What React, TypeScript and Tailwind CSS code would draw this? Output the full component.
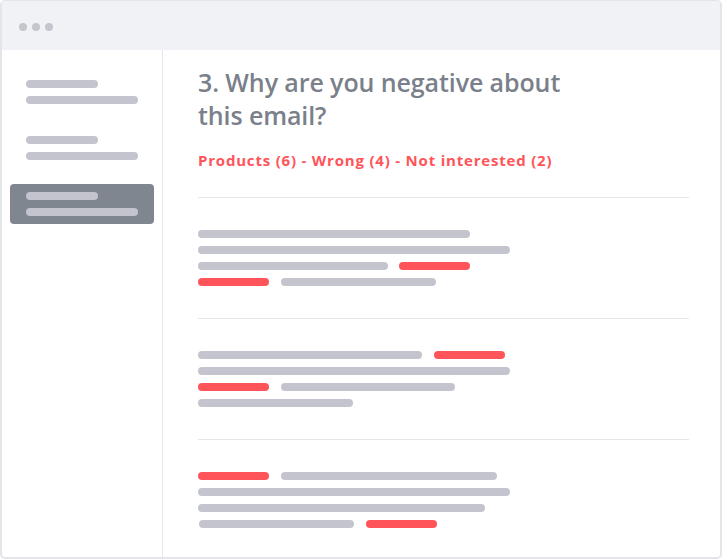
const Bar = ({ w, red = false, ml = 0 }: { w: number; red?: boolean; ml?: number }) => (
  <div
    className={`h-2 rounded-full ${red ? 'bg-[#ff5459]' : 'bg-[#c4c4ce]'}`}
    style={{ width: w, marginLeft: ml }}
  />
);

type Row = { w: number; red?: boolean; ml?: number }[];

const sections: Row[][] = [
  [
    [{ w: 272 }],
    [{ w: 312 }],
    [{ w: 190 }, { w: 71, red: true, ml: 11 }],
    [{ w: 71, red: true }, { w: 155, ml: 12 }],
  ],
  [
    [{ w: 224 }, { w: 71, red: true, ml: 12 }],
    [{ w: 312 }],
    [{ w: 71, red: true }, { w: 174, ml: 12 }],
    [{ w: 155 }],
  ],
  [
    [{ w: 71, red: true }, { w: 216, ml: 12 }],
    [{ w: 312 }],
    [{ w: 287 }],
    [{ w: 155, ml: 1 }, { w: 71, red: true, ml: 12 }],
  ],
];

const SideItem = ({ active = false }: { active?: boolean }) => (
  <div className={`flex h-10 flex-col gap-2 rounded px-4 pt-2 ${active ? 'bg-[#7f8690]' : ''}`}>
    <div className="h-2 w-[72px] rounded-full bg-[#c4c4ce]" />
    <div className="h-2 w-[112px] rounded-full bg-[#c4c4ce]" />
  </div>
);

export default function App() {
  return (
    <div className="h-[559px] w-[722px] bg-white">
      <div className="flex h-full flex-col overflow-hidden rounded-[5px] border-2 border-t border-[#e3e5ea] bg-white">
        <div className="flex h-[49px] shrink-0 items-center gap-[5px] bg-[#f1f2f6] pl-[17px] pt-[2px]">
          <span className="h-2 w-2 rounded-full bg-[#c5c6cd]" />
          <span className="h-2 w-2 rounded-full bg-[#c5c6cd]" />
          <span className="h-2 w-2 rounded-full bg-[#c5c6cd]" />
        </div>
        <div className="flex flex-1">
          <aside className="flex w-[161px] shrink-0 flex-col gap-4 border-r border-[#e5e6e8] px-2 pt-[22px]">
            <SideItem />
            <SideItem />
            <SideItem active />
          </aside>
          <main className="flex-1 pl-[35px] pr-[31px] pt-[16px] font-['Open_Sans',sans-serif]">
            <h1 className="w-[380px] text-[25px] font-semibold leading-[33px] tracking-[-0.1px] text-[#7a808a]">
              3. Why are you negative about this email?
            </h1>
            <p className="mt-[18px] text-[15px] font-bold leading-5 tracking-[0.8px] text-[#ff5459]">
              Products (6) - Wrong (4) - Not interested (2)
            </p>
            <div className="mt-[27px]">
              {sections.map((rows, i) => (
                <div key={i} className="flex flex-col gap-2 border-t border-[#e6e6e8] pb-8 pt-8">
                  {rows.map((row, j) => (
                    <div key={j} className="flex">
                      {row.map((b, k) => (
                        <Bar key={k} w={b.w} red={b.red} ml={b.ml} />
                      ))}
                    </div>
                  ))}
                </div>
              ))}
            </div>
          </main>
        </div>
      </div>
    </div>
  );
}
